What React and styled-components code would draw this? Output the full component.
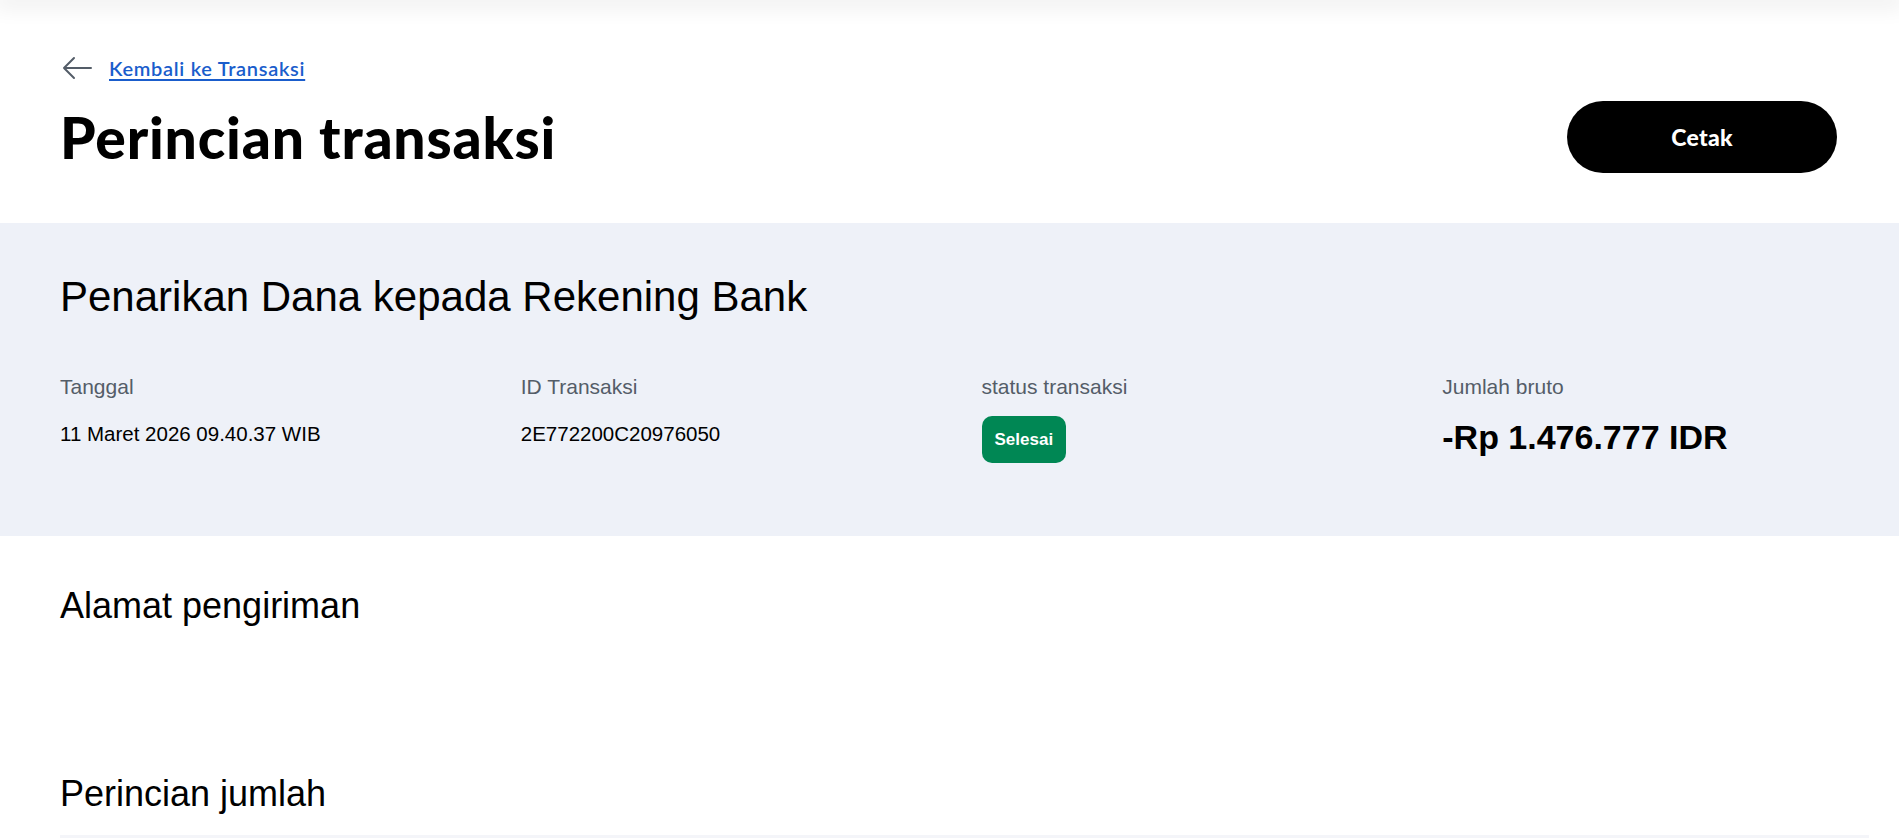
import styled, { createGlobalStyle } from "styled-components";

const GlobalStyle = createGlobalStyle`
  body {
    margin: 0;
    background: #ffffff;
    font-family: "Liberation Sans", Arial, sans-serif;
    color: #000000;
  }
`;

const Page = styled.div`
  display: flex;
  flex-direction: column;
  min-height: 100vh;
  overflow: hidden;
`;

const TopShade = styled.div`
  height: 1px;
  margin-top: -1px;
  box-shadow: 0 0 22px 6px rgba(0, 0, 0, 0.09);
`;

const Header = styled.header`
  padding: 57px 62px 50px 60px;
  display: flex;
  flex-direction: column;
  gap: 22px;
`;

const BackLink = styled.a`
  display: flex;
  align-items: center;
  gap: 16px;
  height: 22px;
  padding-left: 2px;
  font-family: "Lato", "Liberation Sans", sans-serif;
  font-weight: 600;
  font-size: 20px;
  letter-spacing: 0.7px;
  color: #1a5dcc;
  text-decoration: underline;
  text-underline-offset: 3px;
  text-decoration-thickness: 2px;
  cursor: pointer;

  svg {
    flex: none;
  }
`;

const TitleRow = styled.div`
  display: flex;
  align-items: center;
  justify-content: space-between;
  height: 72px;
`;

const Title = styled.h1`
  margin: 0;
  font-family: "Lato", "Liberation Sans", sans-serif;
  font-weight: 900;
  font-size: 57px;
  letter-spacing: 0.8px;
  line-height: 1;
`;

const PrintButton = styled.button`
  width: 270px;
  height: 72px;
  border: none;
  border-radius: 36px;
  background: #000000;
  color: #ffffff;
  font-family: "Lato", "Liberation Sans", sans-serif;
  font-weight: 900;
  font-size: 23px;
  letter-spacing: 0.3px;
  cursor: pointer;
`;

const Summary = styled.section`
  background: #eef1f8;
  padding: 49px 60px 73px 60px;
`;

const SummaryTitle = styled.h2`
  margin: 0 0 53px 0;
  font-weight: 400;
  font-size: 42px;
  line-height: 50px;
`;

const Facts = styled.div`
  display: grid;
  grid-template-columns: repeat(4, 1fr);
  column-gap: 64px;
`;

const Fact = styled.div`
  display: flex;
  flex-direction: column;
  align-items: flex-start;
  gap: 17px;
`;

const Label = styled.div`
  font-size: 21px;
  line-height: 24px;
  color: #545d68;
`;

const Value = styled.div`
  font-size: 20.5px;
  line-height: 34px;
  margin-top: 1px;
`;

const Amount = styled.div`
  margin-top: 1px;
  font-size: 34px;
  line-height: 40px;
  font-weight: 700;
`;

const Badge = styled.span`
  display: inline-flex;
  align-items: center;
  height: 47px;
  padding: 0 13px;
  border-radius: 10px;
  background: #008754;
  color: #ffffff;
  font-weight: 700;
  font-size: 17px;
`;

const Section = styled.section`
  padding: 0 60px;
  margin-top: ${(p) => p.$top || 0}px;
`;

const SectionTitle = styled.h2`
  margin: 0;
  font-weight: 400;
  font-size: 36px;
  line-height: 44px;
`;

const TableHead = styled.div`
  margin: 19px 30px 0 60px;
  height: 40px;
  background: #f4f5f9;
`;

function BackArrow() {
  return (
    <svg width="31" height="24" viewBox="0 0 31 24" fill="none">
      <path
        d="M29 12H2M12 2L2 12l10 10"
        stroke="#545d68"
        strokeWidth="2"
        strokeLinecap="round"
        strokeLinejoin="round"
      />
    </svg>
  );
}

const facts = [
  { label: "Tanggal", value: "11 Maret 2026 09.40.37 WIB" },
  { label: "ID Transaksi", value: "2E772200C20976050" },
  { label: "status transaksi", badge: "Selesai" },
  { label: "Jumlah bruto", amount: "-Rp 1.476.777 IDR" },
];

function App() {
  return (
    <Page>
      <GlobalStyle />
      <TopShade />
      <Header>
        <BackLink>
          <BackArrow />
          <span>Kembali ke Transaksi</span>
        </BackLink>
        <TitleRow>
          <Title>Perincian transaksi</Title>
          <PrintButton>Cetak</PrintButton>
        </TitleRow>
      </Header>

      <Summary>
        <SummaryTitle>Penarikan Dana kepada Rekening Bank</SummaryTitle>
        <Facts>
          {facts.map((f) => (
            <Fact key={f.label}>
              <Label>{f.label}</Label>
              {f.value && <Value>{f.value}</Value>}
              {f.badge && <Badge>{f.badge}</Badge>}
              {f.amount && <Amount>{f.amount}</Amount>}
            </Fact>
          ))}
        </Facts>
      </Summary>

      <Section $top={48}>
        <SectionTitle>Alamat pengiriman</SectionTitle>
      </Section>
      <Section $top={144}>
        <SectionTitle>Perincian jumlah</SectionTitle>
      </Section>
      <TableHead />
    </Page>
  );
}

export default App;
